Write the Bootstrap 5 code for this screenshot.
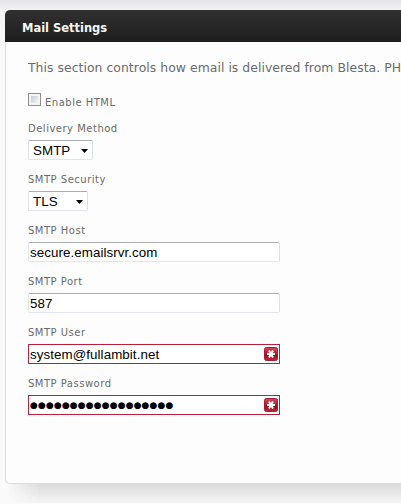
<!DOCTYPE html>
<html lang="en">
<head>
<meta charset="utf-8">
<meta name="viewport" content="width=device-width, initial-scale=1">
<title>Mail Settings</title>
<link href="https://cdn.jsdelivr.net/npm/bootstrap@5.3.0/dist/css/bootstrap.min.css" rel="stylesheet">
<style>
html,body{height:100%}
body{background:linear-gradient(#e4e4e7,#f3f3f4 10px,#f9f9f9 40px,#fafafa);font-family:Verdana,"DejaVu Sans",sans-serif;color:#6a6a6a;padding:10px 0 0 5px}
.panel{height:474px;background:#fdfdfd;border:1px solid #dcdddd;border-width:0 0 1px 1px;border-radius:5px 0 0 5px;position:relative;z-index:1}
.panel-title{height:32px;margin-left:-1px;padding:6px 0 0 17px;background:linear-gradient(#303030,#1e1e1e);border-radius:5px 0 0 0;color:#f5f5f5;font-size:11.5px;font-weight:700;letter-spacing:-.02px}
.panel-content{padding:17px 0 0 22px}
.intro{font-size:12.4px;line-height:18px;letter-spacing:.05px;margin-bottom:16px}
.caption{font-size:10px;line-height:14px;letter-spacing:.5px;display:block;white-space:nowrap}
.enable-row{height:14px;margin-bottom:15px}
.enable-row .caption{padding-top:3px}
.check-box{width:13px;height:13px;border:1px solid #8e8f8f;background:linear-gradient(135deg,#c5cad0,#f6f6f6) content-box,#f4f4f4;padding:2px;appearance:none;border-radius:0;margin:0}
.field{margin-bottom:13px}
.field .caption{margin-bottom:4px}
.control{width:252px;height:20px;border:1px solid #e2e5ee;border-top-color:#abadb3;border-right-color:#dbdfe6;border-radius:2px;background:#fff;color:#000;font:13.33px/18px "Liberation Sans",Arial,sans-serif;letter-spacing:.08px;padding:1px 1px 0;outline:0;display:block}
select.control{appearance:none;padding:1px 0 0 4px}
.w-method{width:65px}.w-security{width:60px}
.arrow{right:5px;top:9px;pointer-events:none}
.required{border:1px solid #b9203c;border-radius:0}
.secret{font-family:"DejaVu Sans",sans-serif;font-size:9px;letter-spacing:.12px;padding-top:0}
.mark-icon{right:2px;top:3px}
.fieldbox{width:max-content}
.under{height:20px;margin-top:-1px;background:linear-gradient(#d9d9d9,#f5f5f5);-webkit-mask-image:linear-gradient(90deg,transparent 2px,#000 35px);mask-image:linear-gradient(90deg,transparent 2px,#000 35px)}
</style>
</head>
<body class="overflow-hidden">
<main class="overflow-hidden">
<section class="panel">
<h1 class="panel-title d-flex align-items-center mb-0">Mail Settings</h1>
<form class="panel-content">
<p class="intro text-nowrap overflow-hidden">This section controls how email is delivered from Blesta. PHP</p>
<div class="d-flex gap-1 enable-row"><input id="html" type="checkbox" class="check-box"><label for="html" class="caption">Enable HTML</label></div>
<div class="field"><label class="caption" for="method">Delivery Method</label><div class="position-relative fieldbox"><select id="method" class="control w-method"><option>SMTP</option></select><svg class="arrow position-absolute" width="7" height="4"><path d="M0 0h7L3.5 4z"/></svg></div></div>
<div class="field"><label class="caption" for="security">SMTP Security</label><div class="position-relative fieldbox"><select id="security" class="control w-security"><option>TLS</option></select><svg class="arrow position-absolute" width="7" height="4"><path d="M0 0h7L3.5 4z"/></svg></div></div>
<div class="field"><label class="caption" for="host">SMTP Host</label><input id="host" class="control" value="secure.emailsrvr.com"></div>
<div class="field"><label class="caption" for="port">SMTP Port</label><input id="port" class="control" value="587"></div>
<div class="field"><label class="caption" for="user">SMTP User</label><div class="position-relative fieldbox"><input id="user" class="control required" value="system@fullambit.net">
<svg class="mark-icon position-absolute" width="14" height="14" viewBox="0 0 14 14"><defs><linearGradient id="red" x2="0" y2="1"><stop stop-color="#d04a58"/><stop offset=".48" stop-color="#bd1c30"/><stop offset=".5" stop-color="#860d1b"/><stop offset="1" stop-color="#c4283b"/></linearGradient></defs><rect x=".5" y=".5" width="13" height="13" rx="2" fill="url(#red)" stroke="#a51c30"/><path d="M3 7h8M5 3.5l4 7M9 3.5l-4 7" stroke="#fff" stroke-width="2"/></svg></div></div>
<div class="field"><label class="caption" for="password">SMTP Password</label><div class="position-relative fieldbox"><input id="password" class="control required secret" value="●●●●●●●●●●●●●●●●●●">
<svg class="mark-icon position-absolute" width="14" height="14" viewBox="0 0 14 14"><rect x=".5" y=".5" width="13" height="13" rx="2" fill="url(#red)" stroke="#a51c30"/><path d="M3 7h8M5 3.5l4 7M9 3.5l-4 7" stroke="#fff" stroke-width="2"/></svg></div></div>
</form>
</section>
<div class="under"></div>
</main>
<script src="https://cdn.jsdelivr.net/npm/bootstrap@5.3.0/dist/js/bootstrap.bundle.min.js"></script>
</body>
</html>
